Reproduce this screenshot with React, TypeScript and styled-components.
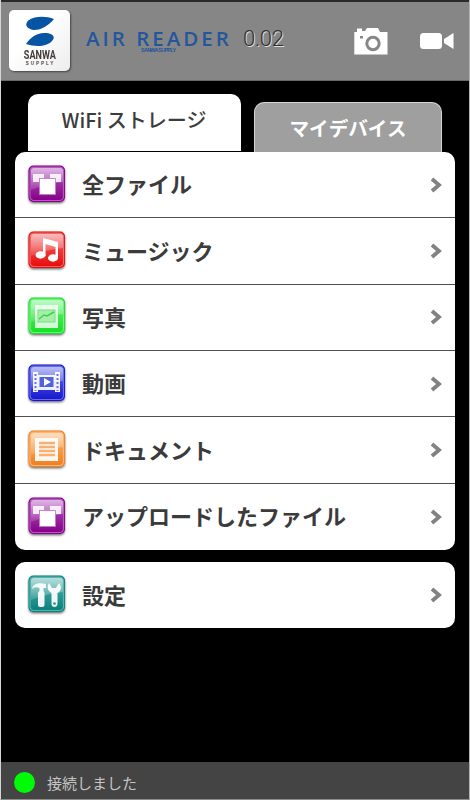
import React from "react";
import styled, { createGlobalStyle } from "styled-components";

const GlobalStyle = createGlobalStyle`
  * { box-sizing: border-box; }
  body { margin: 0; background: #000; }
`;

const jp = `"Noto Sans CJK JP", sans-serif`;

const Screen = styled.div`
  width: 470px;
  height: 800px;
  display: flex;
  flex-direction: column;
  background: #000;
  border-left: 1px solid #d4d4d4;
  border-right: 1px solid #b4b4b4;
  border-bottom: 1px solid #8c8c8c;
  font-family: ${jp};
  overflow: hidden;
`;

const Header = styled.header`
  height: 81px;
  flex: none;
  display: flex;
  align-items: flex-start;
  padding: 8px 0 0 8px;
  background: #868686;
  border-top: 2px solid #292929;
  border-bottom: 1px solid #686868;
`;

const LogoTile = styled.div`
  width: 61px;
  height: 61px;
  border-radius: 5px;
  background: linear-gradient(135deg, #fff 40%, #ededed);
  box-shadow: 1px 1px 2px #444;
  display: flex;
  flex-direction: column;
  align-items: center;
  padding-top: 6px;
`;

const LogoMark = styled.svg`
  width: 30px;
  height: 31px;
  flex: none;
`;

const LogoName = styled.div`
  height: 11px;
  flex: none;
  margin-top: 2px;
  font: 700 13px/11px "Roboto", sans-serif;
  color: #443c3a;
  transform: scaleX(0.7);
  white-space: nowrap;
`;

const LogoSub = styled.div`
  height: 5px;
  flex: none;
  margin-top: 1px;
  font: 700 4.5px/5px "Liberation Sans", sans-serif;
  letter-spacing: 2px;
  margin-right: -2px;
  color: #443c3a;
`;

const Brand = styled.div`
  width: 146px;
  margin: 17px 0 0 16px;
  display: flex;
  flex-direction: column;
`;

const BrandName = styled.div`
  font: 600 20.5px/22px "Open Sans", sans-serif;
  letter-spacing: 3px;
  color: #23569c;
  white-space: nowrap;
`;

const BrandSub = styled.div`
  margin: -2px 0 0 55px;
  font: 700 5.5px/6px "Liberation Sans", sans-serif;
  letter-spacing: -0.75px;
  color: #23569c;
  white-space: nowrap;
`;

const Version = styled.div`
  margin: 17px 0 0 11px;
  width: 46px;
  font: 300 22px/24px "Roboto", sans-serif;
  letter-spacing: -0.3px;
  color: #303030;
  text-shadow: 1px 1px 0 #dedede;
`;

const Actions = styled.div`
  display: flex;
  flex: 1;
  justify-content: flex-end;
  padding: 18px 15.5px 0 0;
  gap: 31.5px;
`;

const Tabs = styled.nav`
  display: flex;
  height: 71px;
  flex: none;
  padding: 13px 0 0 26.5px;
  gap: 13.5px;
`;

const Tab = styled.div<{ $active?: boolean }>`
  width: ${(p) => (p.$active ? 213 : 188)}px;
  height: ${(p) => (p.$active ? 57 : 50)}px;
  margin-top: ${(p) => (p.$active ? 0 : 8)}px;
  border-radius: 10px 10px 0 0;
  background: ${(p) => (p.$active ? "#fff" : "#9f9f9f")};
  border: ${(p) => (p.$active ? "0" : "1px solid #d6d6d6")};
  border-bottom: 0;
  color: ${(p) => (p.$active ? "#3c3c3c" : "#fff")};
  font-size: ${(p) => (p.$active ? 20 : 19.6)}px;
  font-weight: ${(p) => (p.$active ? 500 : 700)};
  line-height: ${(p) => (p.$active ? 52 : 49)}px;
  text-align: center;
`;

const Panel = styled.div`
  width: 440px;
  margin: 0 0 12px 14px;
  flex: none;
  border-radius: 10px;
  background: #fff;
  overflow: hidden;
`;

const Row = styled.div`
  height: 66.35px;
  display: flex;
  align-items: center;
  padding: 0 11px 0 12px;
  border-bottom: 1px solid #505050;
  &:last-child { border-bottom: 0; }
`;

const Label = styled.span`
  flex: 1;
  margin: -3px 0 0 13px;
  font-size: 22px;
  font-weight: 700;
  line-height: 32px;
  color: #3b3b3b;
`;

const StatusBar = styled.footer`
  margin-top: auto;
  height: 37px;
  flex: none;
  display: flex;
  align-items: center;
  padding: 3px 0 0 13px;
  gap: 12px;
  background: #444;
  color: #c4c4c4;
  font-size: 15px;
`;

const Dot = styled.span`
  width: 21px;
  height: 21px;
  border-radius: 50%;
  background: #00fb08;
`;

type Kind = "files" | "music" | "photo" | "video" | "doc" | "tools";

const tones: Record<Kind, [string, string]> = {
  files: ["#b45bc0", "#860088"],
  music: ["#f36a6a", "#e80c0c"],
  photo: ["#70f480", "#16df24"],
  video: ["#6670ee", "#1818cf"],
  doc: ["#ffb672", "#f08020"],
  tools: ["#58b6b0", "#087f7c"],
};

const Glyph = ({ kind }: { kind: Kind }) => {
  switch (kind) {
    case "files":
      return (
        <g>
          <path d="M6 10h11v4h-5v4H6zM23 10h11v8h-6v-4h-5z" fill="#fff" opacity=".85" />
          <rect x="12.500" y="14.500" width="16" height="16" fill="#fff" stroke="#c07cc8" strokeWidth=".8" />
        </g>
      );
    case "music":
      return (
        <g fill="#fff">
          <path d="M16 8l15 4v16h-2.500V17l-10-3v12H16z" />
          <ellipse cx="13.500" cy="25" rx="5" ry="3.700" />
          <ellipse cx="26" cy="28" rx="5" ry="3.700" />
        </g>
      );
    case "photo":
      return (
        <g>
          <rect x="8" y="9" width="23" height="23" fill="#fff" opacity=".8" />
          <rect x="11" y="14" width="17" height="12" fill="#a5efaa" stroke="#70e57c" />
          <path d="M12 23l5-4 3 1 7-4" fill="none" stroke="#40cf50" strokeWidth="1.500" />
        </g>
      );
    case "video":
      return (
        <g>
          <path d="M6 9h5v3h17V9h5v20h-5v-2H11v2H6z" fill="#fff" opacity=".92" />
          <rect x="12.500" y="14" width="14" height="10" fill="#5261de" />
          <path d="M17 15l7 4-7 4z" fill="#fff" />
          <path d="M8.500 11v17M30.500 11v17" stroke="#6a73e4" strokeWidth="2" strokeDasharray="2 2" />
        </g>
      );
    case "doc":
      return (
        <g>
          <rect x="8" y="9" width="23" height="23" fill="#fff" opacity=".92" />
          <path d="M12 14h16M12 18h16M12 22h16M12 26h16" stroke="#f7b172" strokeWidth="2.400" />
        </g>
      );
    default:
      return (
        <g fill="#fff" opacity=".93">
          <path d="M5 15c1-5 6-7 14-5v4h-2.500v4h-4v-4C10 13 7 13 5 15z" />
          <rect x="11" y="17" width="6.500" height="16" rx="2.500" />
          <path d="M22 9l3 5h4l3-5c4 5 1 9-1.500 10v11c0 4-6 4-6 0V19c-4-2-5-6-2.500-10z" />
          <circle cx="27.500" cy="29.500" r="1.300" fill="#258e89" />
        </g>
      );
  }
};

const TileIcon = ({ kind }: { kind: Kind }) => {
  const [light, deep] = tones[kind];
  return (
    <svg width="42" height="42" viewBox="0 0 42 42">
      <defs>
        <linearGradient id={`base-${kind}`} x1="0" y1="0" x2="0" y2="1">
          <stop offset="0" stopColor={light} />
          <stop offset="1" stopColor={deep} />
        </linearGradient>
        <linearGradient id={`shine-${kind}`} x1="0" y1="0" x2="0" y2="1">
          <stop offset="0" stopColor="#fff" stopOpacity=".55" />
          <stop offset="1" stopColor="#fff" stopOpacity=".12" />
        </linearGradient>
        <filter id={`shade-${kind}`} x="-20%" y="-20%" width="140%" height="150%">
          <feDropShadow dx="0" dy="1.300" stdDeviation="1" floodOpacity=".6" />
        </filter>
      </defs>
      <rect x="1.500" y="1.500" width="36.500" height="36.500" rx="5" fill={deep} filter={`url(#shade-${kind})`} />
      <rect x="3" y="3" width="33.500" height="33.500" rx="4" fill={`url(#base-${kind})`} stroke={light} strokeWidth="1.200" />
      <path d="M4 7q0-3 3-3h26q3 0 3 3v11q-14 1-32 8z" fill={`url(#shine-${kind})`} />
      <Glyph kind={kind} />
    </svg>
  );
};

const Chevron = () => (
  <svg width="16" height="20" viewBox="0 0 16 20">
    <path d="M4 4l7 6-7 6" fill="none" stroke="#828282" strokeWidth="3.800" />
  </svg>
);

const items: { kind: Kind; label: string }[] = [
  { kind: "files", label: "全ファイル" },
  { kind: "music", label: "ミュージック" },
  { kind: "photo", label: "写真" },
  { kind: "video", label: "動画" },
  { kind: "doc", label: "ドキュメント" },
  { kind: "files", label: "アップロードしたファイル" },
];

const MenuRow = ({ kind, label }: { kind: Kind; label: string }) => (
  <Row>
    <TileIcon kind={kind} />
    <Label>{label}</Label>
    <Chevron />
  </Row>
);

export default function App() {
  return (
    <>
      <GlobalStyle />
      <Screen>
        <Header>
          <LogoTile>
            <LogoMark viewBox="0 0 30 31">
              <path d="M29 3C21 0 10 0 4 4C-1 8 1 13 9 14C17 14 24 9 29 3Z" fill="#0754a5" />
              <path d="M1 28C5 22 11 17 19 17C28 17 31 21 27 25C22 31 10 31 1 28Z" fill="#0754a5" />
            </LogoMark>
            <LogoName>SANWA</LogoName>
            <LogoSub>SUPPLY</LogoSub>
          </LogoTile>
          <Brand>
            <BrandName>AIR READER</BrandName>
            <BrandSub>SANWA SUPPLY</BrandSub>
          </Brand>
          <Version>0.02</Version>
          <Actions>
            <svg width="34" height="28" viewBox="0 0 34 28">
              <path d="M3 0.500h5v2.500h3l2-3h11l2 4h7.500v22.500H0.300V4H3z" fill="#fff" />
              <circle cx="19" cy="15.500" r="6.200" fill="#fff" stroke="#868686" strokeWidth="3" />
              <rect x="6" y="8" width="3" height="2.500" fill="#868686" />
            </svg>
            <svg width="34" height="28" viewBox="0 0 34 28">
              <rect x="0" y="5" width="22" height="16" rx="3.500" fill="#fff" />
              <path d="M33.500 5v16l-9.500-6v-4z" fill="#fff" />
            </svg>
          </Actions>
        </Header>
        <Tabs>
          <Tab $active>WiFi ストレージ</Tab>
          <Tab>マイデバイス</Tab>
        </Tabs>
        <Panel>
          {items.map((item) => (
            <MenuRow key={item.label} {...item} />
          ))}
        </Panel>
        <Panel>
          <MenuRow kind="tools" label="設定" />
        </Panel>
        <StatusBar>
          <Dot />
          <span>接続しました</span>
        </StatusBar>
      </Screen>
    </>
  );
}
